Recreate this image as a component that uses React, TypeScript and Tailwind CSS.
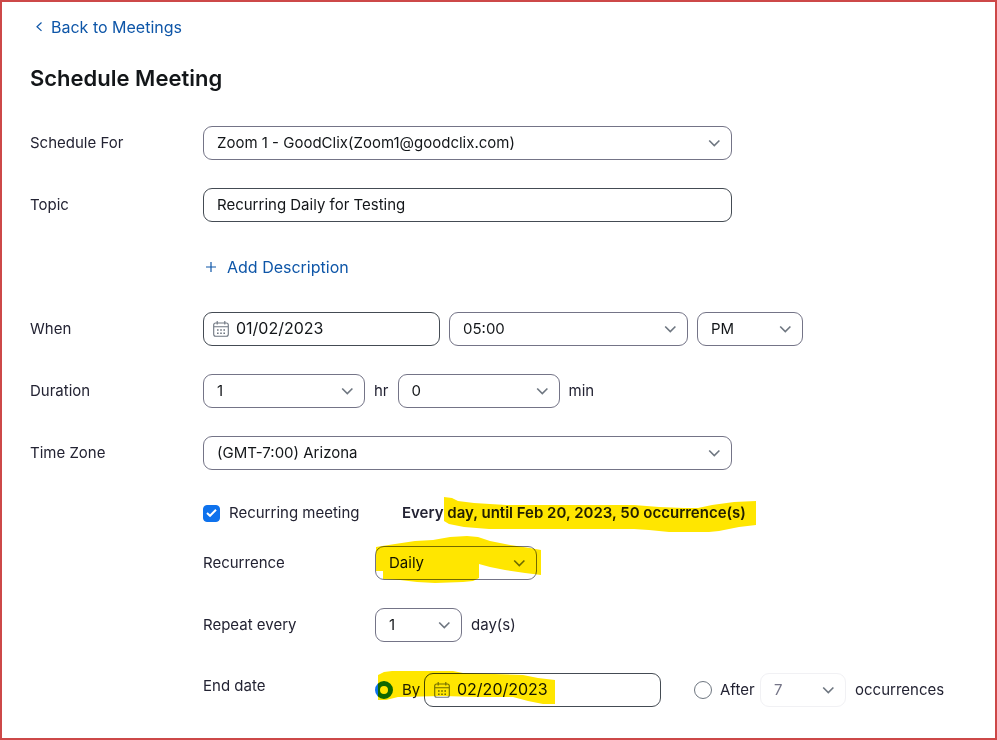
import { useState } from "react";
import type { ReactNode } from "react";

function ChevronDown() {
  return (
    <svg
      className="pointer-events-none absolute top-1/2 right-3 -translate-y-1/2 text-[#6e7680]"
      width="12"
      height="8"
      viewBox="0 0 12 8"
      fill="none"
      stroke="currentColor"
      strokeWidth="1.6"
      aria-hidden="true"
    >
      <path d="M1.200 1.500 6.300 6.600 11.400 1.500" />
    </svg>
  );
}

function CalendarIcon() {
  return (
    <svg
      className="pointer-events-none absolute top-1/2 left-[10px] -translate-y-1/2 text-[#6e7680]"
      width="16"
      height="16"
      viewBox="0 0 16 16"
      fill="none"
      stroke="currentColor"
      aria-hidden="true"
    >
      <rect x="0.7" y="2" width="14.6" height="13.2" rx="2" strokeWidth="1.1" />
      <path d="M1 5.8h14M4.2 0v3.6M11.8 0v3.6" strokeWidth="1.1" />
      <path d="M4 9h1.6M7.2 9h1.6M10.4 9H12M4 12.2h1.6M7.2 12.2h1.6M10.4 12.2H12" strokeWidth="1.6" />
    </svg>
  );
}

type SelectProps = {
  id: string;
  label?: string;
  options: string[];
  width: string;
  disabled?: boolean;
};

function Select({ id, label, options, width, disabled }: SelectProps) {
  return (
    <div className={`relative max-w-full shrink-0 ${width}`}>
      <select
        id={id}
        aria-label={label}
        disabled={disabled}
        className="h-[34px] w-full appearance-none rounded-[9px] border border-[#747487] bg-white px-[13px] text-[15px] text-[#131619] disabled:border-[#f1f1f4] disabled:text-[#747487] disabled:opacity-100"
      >
        {options.map((option) => (
          <option key={option}>{option}</option>
        ))}
      </select>
      <ChevronDown />
    </div>
  );
}

function DateInput({ id, label, value }: { id: string; label?: string; value: string }) {
  return (
    <div className="relative w-[237px] max-w-full shrink-0">
      <input
        id={id}
        aria-label={label}
        type="text"
        defaultValue={value}
        className="h-[34px] w-full rounded-[9px] border border-[#444b53] bg-white pr-3 pb-0.5 pl-8 text-base text-[#131619]"
      />
      <CalendarIcon />
    </div>
  );
}

function Row({ label, htmlFor, children }: { label: string; htmlFor: string; children: ReactNode }) {
  return (
    <div className="flex min-h-[34px] items-center">
      <label htmlFor={htmlFor} className="w-[173px] shrink-0">
        {label}
      </label>
      <div className="flex min-w-0 grow items-center gap-[9px]">{children}</div>
    </div>
  );
}

function SubRow({ label, htmlFor, children }: { label: string; htmlFor: string; children: ReactNode }) {
  return (
    <div className="flex items-center">
      <label htmlFor={htmlFor} className="w-[172px] shrink-0">
        {label}
      </label>
      <div className="relative flex items-center gap-[9px]">{children}</div>
    </div>
  );
}

const radioClass =
  "size-[18px] shrink-0 appearance-none rounded-full border border-[#6e7680] bg-white checked:border-[5px] checked:border-[#0e72ed]";

export default function App() {
  const [recurring, setRecurring] = useState(true);
  const [end, setEnd] = useState("by");

  return (
    <main className="min-h-screen border-2 border-[#cd4848] bg-white px-7 pt-[13px] pb-6 font-['Inter','Liberation_Sans',sans-serif] text-[15px] leading-6 text-[#232333]">
      <a href="#meetings" className="inline-flex items-center gap-2 pl-[5px] text-base leading-6 text-[#0e56a8]">
        <svg width="8" height="10" viewBox="0 0 8 10" fill="none" stroke="currentColor" strokeWidth="1.2" aria-hidden="true">
          <path d="M6.500 0.500 2 4.700l4.500 4.200" />
        </svg>
        Back to Meetings
      </a>
      <h1 className="mt-[23px] text-[22px] leading-8 font-semibold text-[#131619]">Schedule Meeting</h1>

      <form className="mt-8" onSubmit={(event) => event.preventDefault()}>
        <div className="flex flex-col gap-7">
          <Row label="Schedule For" htmlFor="schedule-for">
            <Select id="schedule-for" options={["Zoom 1 - GoodClix(Zoom1@goodclix.com)"]} width="w-[529px]" />
          </Row>
          <Row label="Topic" htmlFor="topic">
            <input
              id="topic"
              type="text"
              defaultValue="Recurring Daily for Testing"
              className="h-[34px] w-[529px] max-w-full rounded-[9px] border border-[#444b53] bg-white px-[13px] pb-0.5 text-[15px] text-[#131619]"
            />
          </Row>
          <div className="flex h-[34px] items-center pl-[173px]">
            <button type="button" className="flex items-center gap-[11px] pl-[3px] text-base leading-6 text-[#0e56a8]">
              <svg width="10" height="10" viewBox="0 0 10 10" fill="none" stroke="currentColor" strokeWidth="1.2" aria-hidden="true">
                <path d="M5 0v10M0 5h10" />
              </svg>
              Add Description
            </button>
          </div>
          <Row label="When" htmlFor="start-date">
            <DateInput id="start-date" value="01/02/2023" />
            <Select id="start-time" label="Start time" options={["05:00", "05:30"]} width="w-[239px]" />
            <Select id="meridiem" label="AM or PM" options={["PM", "AM"]} width="w-[106px]" />
          </Row>
          <Row label="Duration" htmlFor="hours">
            <Select id="hours" options={["1", "2", "3"]} width="w-[162px]" />
            <label htmlFor="hours">hr</label>
            <Select id="minutes" options={["0", "15", "30", "45"]} width="w-[162px]" />
            <label htmlFor="minutes">min</label>
          </Row>
          <Row label="Time Zone" htmlFor="time-zone">
            <Select id="time-zone" options={["(GMT-7:00) Arizona"]} width="w-[529px]" />
          </Row>
        </div>

        <div className="pl-[173px]">
          <div className="mt-[26px] flex h-[34px] items-center">
            <div className="relative flex w-[199px] shrink-0 items-center gap-[9px]">
              <input
                id="recurring"
                type="checkbox"
                checked={recurring}
                onChange={(event) => setRecurring(event.target.checked)}
                className="size-[17px] appearance-none rounded-[4px] border border-[#6e7680] checked:border-[#0e72ed] checked:bg-[#0e72ed]"
              />
              <svg
                className="pointer-events-none absolute top-1/2 left-[3px] -translate-y-1/2"
                width="11"
                height="9"
                viewBox="0 0 11 9"
                fill="none"
                stroke="white"
                strokeWidth="2"
                aria-hidden="true"
              >
                <path d="M1 4.500 4 7.300 10 1.300" />
              </svg>
              <label htmlFor="recurring">Recurring meeting</label>
            </div>
            <p className="relative font-semibold">
              Every day, until Feb 20, 2023, 50 occurrence(s)
              <svg
                className="pointer-events-none absolute -top-1 left-[42px] mix-blend-multiply"
                width="313"
                height="36"
                viewBox="0 0 313 36"
                aria-hidden="true"
              >
                <path
                  fill="#ffe600"
                  d="M0 0 8 1 14 4 30 6 62 8H190L215 10 240 11H254L268 8 290 5 312 4V28L295 30 275 34 265 35H225L205 33 190 32H45L20 30 5 27 0 24Z"
                />
              </svg>
            </p>
          </div>

          <div className="mt-4 flex flex-col gap-7">
            <SubRow label="Recurrence" htmlFor="recurrence">
              <Select id="recurrence" options={["Daily", "Weekly", "Monthly"]} width="w-[162px]" />
              <svg
                className="pointer-events-none absolute -top-[10px] left-0 mix-blend-multiply"
                width="167"
                height="48"
                viewBox="0 0 167 48"
                aria-hidden="true"
              >
                <path
                  fill="#ffe600"
                  d="M1 11 20 8 40 5 58 4 75 1 92 0 103 1 115 5 135 9 155 12 166 14V39L150 37 130 34 115 31 104 28V42L98 45 88 46 60 47 42 46 25 44 8 43V35H1Z"
                />
              </svg>
            </SubRow>
            <SubRow label="Repeat every" htmlFor="repeat-every">
              <Select id="repeat-every" options={["1", "2", "3"]} width="w-[87px]" />
              <label htmlFor="repeat-every">day(s)</label>
            </SubRow>
            <fieldset className="flex items-start">
              <legend className="float-left flex h-8 w-[172px] items-center">End date</legend>
              <div className="relative mt-[3px] flex items-center">
                <input
                  id="end-by"
                  type="radio"
                  name="end"
                  checked={end === "by"}
                  onChange={() => setEnd("by")}
                  className={radioClass}
                />
                <label htmlFor="end-by" className="w-[31px] pl-[9px]">
                  By
                </label>
                <DateInput id="end-date" label="End by date" value="02/20/2023" />
                <svg
                  className="pointer-events-none absolute -top-0.5 left-[3px] mix-blend-multiply"
                  width="177"
                  height="33"
                  viewBox="0 0 177 33"
                  aria-hidden="true"
                >
                  <path
                    fill="#ffe600"
                    d="M0 4 6 1 14 0H75L85 2 145 4 160 7 177 9V33H165L150 30 135 26H100L65 25 20 26 8 29H0Z"
                  />
                </svg>
                <div className="ml-[33px] flex items-center">
                  <input
                    id="end-after"
                    type="radio"
                    name="end"
                    checked={end === "after"}
                    onChange={() => setEnd("after")}
                    className={radioClass}
                  />
                  <label htmlFor="end-after" className="w-12 pl-2">
                    After
                  </label>
                  <Select
                    id="occurrences"
                    options={["7", "10", "20"]}
                    width="w-[86px]"
                    disabled={end !== "after"}
                  />
                  <label htmlFor="occurrences" className="pl-[9px]">
                    occurrences
                  </label>
                </div>
              </div>
            </fieldset>
          </div>
        </div>
      </form>
    </main>
  );
}
